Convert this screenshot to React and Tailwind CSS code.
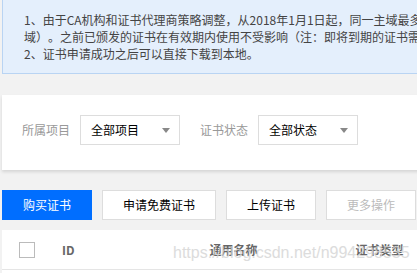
import React from "react";

const font = { fontFamily: '"Noto Sans CJK SC", "Liberation Sans", sans-serif' };

function Select({ value }) {
  return (
    <div className="flex items-center justify-between w-[100px] h-[30px] border border-[#dddddd] bg-white pl-[10px] pr-[9px] text-[12px] text-black">
      <span>{value}</span>
      <span className="w-0 h-0 border-l-[4px] border-r-[4px] border-t-[5px] border-l-transparent border-r-transparent border-t-[#888888]"></span>
    </div>
  );
}

function App() {
  return (
    <div className="w-[417px] h-[273px] overflow-hidden bg-[#f2f2f2] relative" style={font}>
      <div className="w-[1000px] pl-[2px]">
        <div className="mt-[-1px] border border-[#b9d4f3] bg-[#e4effc] pl-[21px] pt-[11px] pb-[11px] text-[12px] leading-[17px] text-[#444444] whitespace-nowrap [text-spacing-trim:space-all]">
          <div>1、由于CA机构和证书代理商策略调整，从2018年1月1日起，同一主域最多只能申请20张免费证书（包含子</div>
          <div>域）。之前已颁发的证书在有效期内使用不受影响（注：即将到期的证书需要重新申请）。</div>
          <div>2、证书申请成功之后可以直接下载到本地。</div>
        </div>

        <div className="mt-[21px] bg-white shadow-[0_2px_3px_rgba(0,0,0,0.12)] pt-5 pb-[25px] pl-5 flex items-center text-[12px]">
          <span className="text-[#999999] mr-[10px]">所属项目</span>
          <Select value="全部项目" />
          <span className="text-[#999999] ml-5 mr-[10px]">证书状态</span>
          <Select value="全部状态" />
        </div>

        <div className="mt-5 flex gap-[10px] text-[12px]">
          <button className="w-[90px] h-[30px] bg-[#006eff] text-white">购买证书</button>
          <button className="w-[114px] h-[30px] bg-white border border-[#dddddd] text-black">申请免费证书</button>
          <button className="w-[90px] h-[30px] bg-white border border-[#dddddd] text-black">上传证书</button>
          <button className="w-[90px] h-[30px] bg-white border border-[#dddddd] text-[#bbbbbb]">更多操作</button>
        </div>

        <div className="mt-[10px] bg-white h-[60px]">
          <div className="h-[40px] border-b border-[#e5e5e5] flex items-center text-[12px] font-bold text-[#666666]">
            <span className="ml-[17px] w-[16px] h-[16px] border border-[#bbbbbb] bg-white"></span>
            <span className="ml-[27px]">ID</span>
            <span className="ml-[135px]">通用名称</span>
            <span className="ml-[98px]">证书类型</span>
          </div>
        </div>
      </div>
      <div
        className="absolute left-[173px] top-[241px] text-[16px] text-[#d4d4d4] opacity-80 whitespace-nowrap"
        style={{ fontFamily: '"Liberation Sans", sans-serif' }}
      >
        https://blog.csdn.net/n994298535
      </div>
    </div>
  );
}

export default App;
